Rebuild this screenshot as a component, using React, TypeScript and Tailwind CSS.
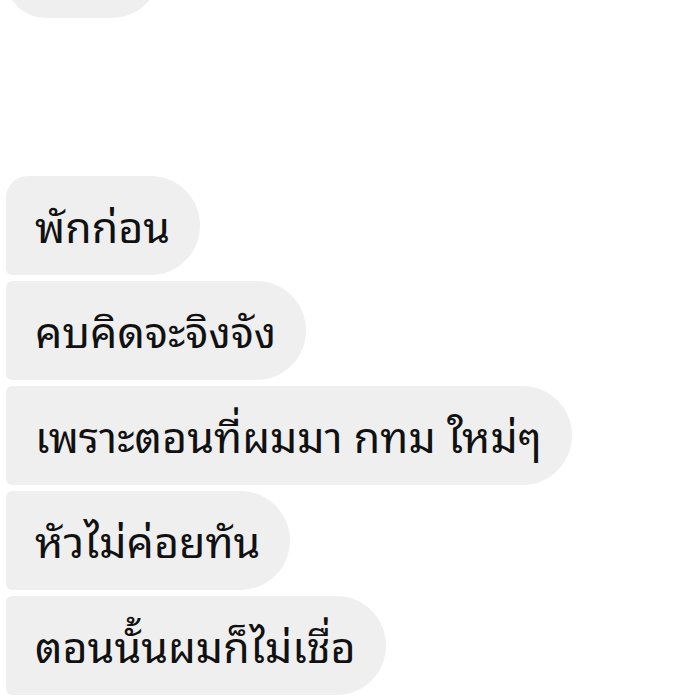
const messages = [
  "พักก่อน",
  "คบคิดจะจิงจัง",
  "เพราะตอนที่ผมมา กทม ใหม่ๆ",
  "หัวไม่ค่อยทัน",
  "ตอนนั้นผมก็ไม่เชื่อ",
]

export default function App() {
  return (
    <div
      className="w-[700px] h-[699px] overflow-hidden bg-white"
      style={{ fontFamily: '"Noto Sans Thai Looped", "Noto Sans", sans-serif' }}
    >
      {/* previous group, cut off at the top */}
      <div className="ml-[6px] -mt-[81px] h-[99px] w-[155px] rounded-tl-[6px] rounded-bl-[40px] rounded-r-[50px] bg-[#efefef]" />

      <div className="mt-[158px] flex flex-col items-start gap-[6px] pl-[6px]">
        {messages.map((m, i) => (
          <div
            key={i}
            className={
              "h-[99px] flex items-center pl-[29px] pr-[30px] pb-[4px] rounded-r-[50px] bg-[#efefef] text-[#111] text-[43px] font-[450] leading-none whitespace-nowrap " +
              (i === 0 ? "rounded-tl-[22px] rounded-bl-[6px]" : "rounded-l-[6px]")
            }
          >
            {m}
          </div>
        ))}
      </div>
    </div>
  )
}
